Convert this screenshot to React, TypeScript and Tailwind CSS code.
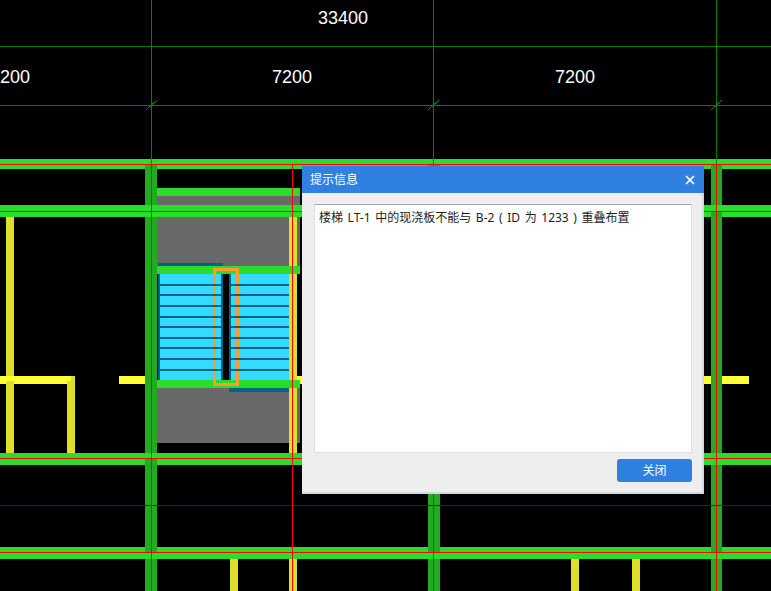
import { X } from 'lucide-react';

type Box = [number, number, number, number, string];

const BEAM = '#2bdd2b';
const COLUMN = '#22ab22';
const YELLOW = '#ffff33';
const DIM_YELLOW = '#dfdf2b';
const GREY = '#696969';
const CYAN = '#33dcff';
const TEAL = '#006488';
const ORANGE = '#ff9b2f';

// x, y, w, h, colour - painted in order
const shapes: Box[] = [
  // slab
  [157, 196, 143, 70, GREY],
  [157, 388, 143, 55, GREY],

  // stair flights
  [158, 263, 65, 3, TEAL],
  [158, 274, 65, 106, TEAL],
  [160, 274, 61, 106, CYAN],
  [229, 274, 60, 118, TEAL],
  [231, 274, 58, 114, CYAN],
  [222, 263, 1, 3, TEAL],

  // yellow walls
  [0, 376, 75, 8, YELLOW],
  [119, 376, 26, 8, YELLOW],
  [297, 376, 5, 8, YELLOW],
  [704, 376, 45, 8, YELLOW],
  [6, 217, 8, 159, DIM_YELLOW],
  [6, 381, 8, 72, DIM_YELLOW],
  [67, 381, 8, 72, DIM_YELLOW],
  [71, 376, 4, 5, DIM_YELLOW],
  [289, 217, 8, 236, DIM_YELLOW],
  [230, 559, 8, 32, DIM_YELLOW],
  [289, 559, 8, 32, DIM_YELLOW],
  [571, 559, 8, 32, DIM_YELLOW],
  [632, 559, 8, 32, DIM_YELLOW],

  // columns
  [145, 165, 12, 426, COLUMN],
  [428, 165, 12, 426, COLUMN],
  [711, 165, 11, 426, COLUMN],

  // beams
  [0, 159, 771, 6, BEAM],
  [0, 165, 145, 4, BEAM],
  [157, 165, 271, 4, BEAM],
  [440, 165, 271, 4, BEAM],
  [722, 165, 49, 4, BEAM],
  [0, 205, 771, 12, BEAM],
  [0, 453, 771, 12, BEAM],
  [0, 547, 771, 12, BEAM],
  [145, 547, 12, 5, COLUMN],
  [428, 547, 12, 5, COLUMN],
  [711, 547, 11, 5, COLUMN],
  [711, 212, 11, 5, COLUMN],
  [145, 459, 12, 6, COLUMN],
  [157, 188, 143, 8, BEAM],
  [157, 266, 143, 8, BEAM],
  [157, 380, 143, 8, BEAM],

  // orange frame
  [213, 268, 26, 3, ORANGE],
  [213, 383, 26, 3, ORANGE],
  [213, 268, 3, 118, ORANGE],
  [236, 268, 3, 118, ORANGE],
];

const treads = [284, 294, 305, 316, 326, 337, 347, 358, 369];
const gridX = [151, 433, 716];
const axisY = [164, 211, 458, 552];

const labels = [
  { x: 343, y: 24, text: '33400' },
  { x: 15, y: 83, text: '200' },
  { x: 292, y: 83, text: '7200' },
  { x: 575, y: 83, text: '7200' },
];

function Drawing() {
  return (
    <svg width={771} height={591} viewBox="0 0 771 591" className="block" shapeRendering="crispEdges">
      {shapes.map(([x, y, w, h, fill], i) => (
        <rect key={`shape-${i}`} x={x} y={y} width={w} height={h} fill={fill} />
      ))}
      {treads.map((y) => (
        <g key={`tread-${y}`} fill={TEAL}>
          <rect x={160} y={y} width={61} height={2} />
          <rect x={231} y={y} width={58} height={2} />
        </g>
      ))}

      {/* axis lines */}
      <rect x={0} y={46} width={771} height={1} fill="#008000" />
      <rect x={0} y={105} width={771} height={1} fill="#008000" />
      {gridX.map((x) => (
        <g key={`grid-${x}`}>
          <rect x={x} y={0} width={1} height={165} fill="#008000" />
          <path d={`M${x - 5} 110L${x + 6} 100`} stroke="#008000" />
        </g>
      ))}
      <rect x={0} y={505} width={771} height={1} fill="#800000" />
      {axisY.map((y) => (
        <rect key={`axis-${y}`} x={0} y={y} width={771} height={1} fill="#ff0000" />
      ))}
      {[151, 292, 433, 716].map((x) => (
        <rect key={`axis-v-${x}`} x={x} y={164} width={1} height={427} fill="#ff0000" />
      ))}

      {labels.map((label) => (
        <text
          key={`${label.text}-${label.x}`}
          x={label.x}
          y={label.y}
          textAnchor="middle"
          fill="#ffffff"
          className="font-['Liberation_Sans',sans-serif] text-[18px]"
        >
          {label.text}
        </text>
      ))}
    </svg>
  );
}

function Dialog() {
  return (
    <div className="absolute left-[302px] top-[166px] w-[402px] h-[328px] flex flex-col font-['Noto_Sans','Noto_Sans_CJK_SC',sans-serif] text-[12px]">
      <div className="h-[27px] shrink-0 flex items-center justify-between bg-[#2f80e0] pl-2 pr-[7px] pt-px text-white">
        <span>提示信息</span>
        <X size={14} strokeWidth={3} />
      </div>
      <div className="flex-1 flex flex-col bg-[#eeeeee] border-r-2 border-b-2 border-[#d4d7df] pl-3 pr-[10px] pt-[11px]">
        <div className="h-[249px] bg-white border border-[#dcdfe6] border-t-[#a8a8a8] px-1 pt-1 text-[#222222] whitespace-pre [word-spacing:1.5px]">
          楼梯 LT-1 中的现浇板不能与 B-2 ( ID 为 1233 ) 重叠布置
        </div>
        <div className="flex justify-end mt-[6px]">
          <button className="w-[75px] h-[23px] rounded-[3px] bg-[#2f80e0] text-white">关闭</button>
        </div>
      </div>
    </div>
  );
}

export default function App() {
  return (
    <div className="relative w-[771px] h-[591px] bg-black overflow-hidden">
      <Drawing />
      <Dialog />
    </div>
  );
}
